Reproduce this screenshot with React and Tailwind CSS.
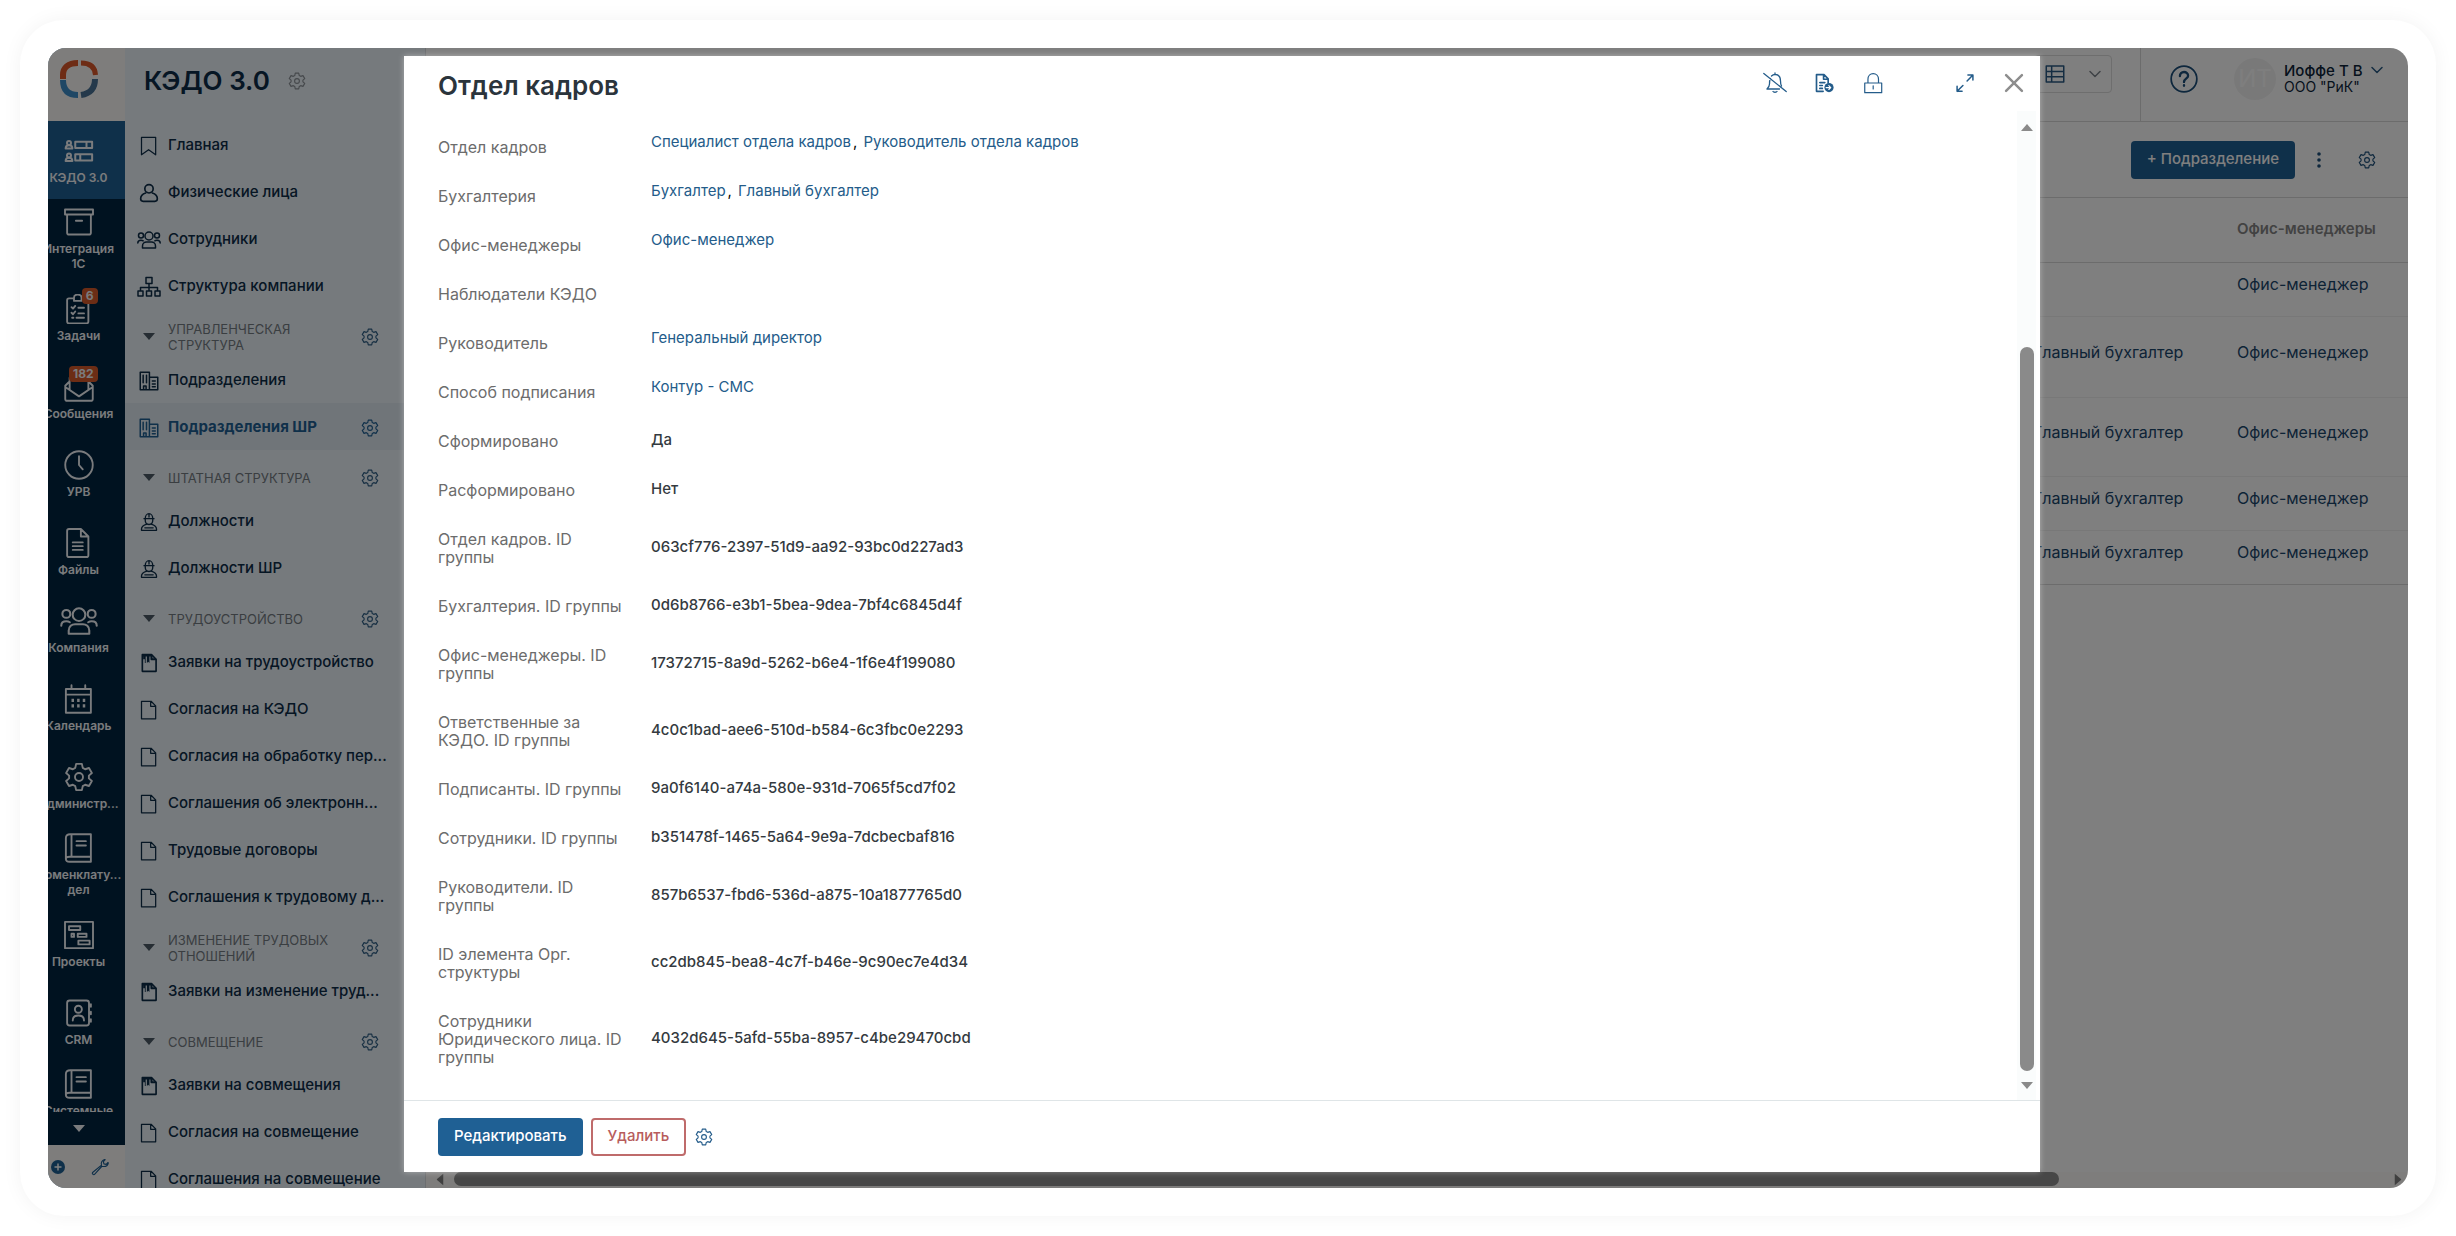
import { Fragment } from 'react';
import clsx from 'clsx';

// ---------- icons ----------

function Icon({ size = 20, stroke = 1.5, className, children }) {
  return (
    <svg
      width={size}
      height={size}
      viewBox="0 0 24 24"
      fill="none"
      stroke="currentColor"
      strokeWidth={stroke}
      strokeLinecap="round"
      strokeLinejoin="round"
      className={clsx('shrink-0', className)}
      aria-hidden="true"
    >
      {children}
    </svg>
  );
}

const Gear = (props) => (
  <Icon {...props}>
    <path d="M9.7 1.5h4.6l.7 3.2 1.9 1.1 3.1-1 2.3 4-2.4 2.1v2.2l2.4 2.1-2.3 4-3.1-1-1.9 1.1-.7 3.2H9.7L9 19.300l-1.900-1.100-3.100 1-2.300-4 2.400-2.100v-2.200L1.700 8.800l2.300-4 3.100 1L9 4.700z" />
    <circle cx="12" cy="12" r="3.200" />
  </Icon>
);

const Bookmark = () => <Icon><path d="M3 1.500h17v21l-8.500-6-8.500 6z" /></Icon>;

const Person = () => (
  <Icon stroke={2}>
    <circle cx="12" cy="7" r="5" />
    <path d="M8 12c-3.500 1-6 3.500-6 7 0 2 1 3 3 3h14c2 0 3-1 3-3 0-3.500-2.500-6-6-7" />
  </Icon>
);

const People = ({ size = 24, stroke = 1.5 }) => (
  <Icon size={size} stroke={stroke}>
    <circle cx="12" cy="8" r="4" />
    <circle cx="4" cy="7.500" r="2.500" />
    <circle cx="20" cy="7.500" r="2.500" />
    <path d="M5.500 20v-2c0-2.500 2-4 4-4h5c2 0 4 1.500 4 4v2z" />
    <path d="M.8 15c0-2 1.400-2.800 3.200-2.800 1 0 1.600.2 2.200.6M23.200 15c0-2-1.400-2.800-3.200-2.800-1 0-1.600.2-2.200.6" />
  </Icon>
);

const OrgTree = () => (
  <Icon size={24}>
    <path d="M9 2.500h6v6H9zM1 16h5v5H1zM9.500 16h5v5h-5zM18 16h5v5h-5zM12 8.500V16M3.500 16v-3.500h17V16" />
  </Icon>
);

const Building = () => (
  <Icon stroke={1.800}>
    <path d="M1.500 1.500h11v21h-11zM12.500 7.500h10v15h-10z" />
    <path d="M5 5v9M9 5v9M5.500 22v-4h3v4M16 12h3.500M16 15.500h3.500M16 19h3.500" />
  </Icon>
);

const Worker = () => (
  <Icon stroke={1.600}>
    <path d="M6 8h12M7.500 8c0-3.500 2-6 4.500-6s4.500 2.500 4.500 6M12 2v4M7.500 8v2c0 3 2 5 4.500 5s4.500-2 4.500-5V8" />
    <path d="M9.500 14.500C6 15.500 3 17 3 20.500V22h18v-1.500c0-3.500-3-5-6.500-6M7 19h10" />
  </Icon>
);

const Doc = () => <Icon><path d="M3 1.500h11.500l5.500 5.500v15.500H3zM14 1.500v6h6" /></Icon>;

const DocMarked = () => (
  <Icon stroke={2}>
    <path d="M4 2h11l5.500 5.500V22H4z" />
    <path d="M5 2.500h3v5H5zM9.500 3h3v9L11 10.500 9.500 12zM7 3h1v9H7z" fill="currentColor" stroke="none" />
    <path d="M5 3h9M15 3v4.500h4.500" strokeWidth="2.500" />
  </Icon>
);

const Forms = () => (
  <Icon size={30} stroke={1.600}>
    <circle cx="4" cy="5.500" r="1.600" />
    <path d="M1.300 10c0-2 1-2.600 2.700-2.600S6.700 8 6.700 10zM9 4.500h13.500v5H9zM18 4.500v5" />
    <circle cx="4" cy="15.500" r="1.600" />
    <path d="M1.300 20c0-2 1-2.600 2.700-2.600s2.700.6 2.700 2.600zM9 14.500h13.500v5H9zM13 14.500v5" />
  </Icon>
);

const Archive = () => (
  <Icon size={30}><path d="M.8 2h22.400v4H.8zM2.500 6h19v14.500c0 1-.5 1.500-1.500 1.500H4c-1 0-1.500-.5-1.500-1.500zM9.500 11h5" /></Icon>
);

const Tasks = () => (
  <Icon size={30}>
    <path d="M7 3.500H4c-1 0-1.500.5-1.500 1.500v17c0 1 .5 1.500 1.500 1.500h14c1 0 1.500-.5 1.500-1.500V5c0-1-.5-1.500-1.500-1.500h-3M8 5.500V3c0-1.500 1-2.500 3-2.500s3 1 3 2.500v2.500z" />
    <path d="M6 10.500l1.200 1.200L9 9.500M11.500 11H16M6 15l1.200 1.200L9 14M11.500 15.500H16M6.500 19h1M10 19h6" />
  </Icon>
);

const Mail = () => (
  <Icon size={30}>
    <path d="M4 8L1 11v10.500c0 1 .5 1.500 1.500 1.500h19c1 0 1.500-.5 1.500-1.500V11l-3-3M1 12l11 7.500L23 12M4.500 14V4.500h15V14" />
  </Icon>
);

const Clock = () => <Icon size={30}><circle cx="12" cy="12" r="11" /><path d="M12 5v7l3 3.500" /></Icon>;

const FileText = () => (
  <Icon size={30}><path d="M13.500.8H4c-1 0-1.500.5-1.500 1.500v19.400c0 1 .5 1.500 1.500 1.500h14c1 0 1.500-.5 1.500-1.500V6.800zM13.500.8v6h6M7 11.500h8M7 14.500h8M7 17.500h8" /></Icon>
);

const Calendar = () => (
  <Icon size={30}>
    <path d="M1.500 4h20v19h-20zM1.500 8.500h20M6 1v3M17 1v3" />
    <path d="M6 13h2M10.500 13h2M15 13h2M6 17.500h2M10.500 17.500h2M15 17.500h2" strokeWidth="2.600" strokeLinecap="butt" />
  </Icon>
);

const Book = () => (
  <Icon size={30}>
    <path d="M5 1h16.500v22H4.500c-2 0-3-1-3-2.500V4c0-2 1.500-3 3.500-3zM6 1v18M1.500 20.500c0-1 1-1.500 3-1.500h17M10 6.500h7.500M10 10h7.500" />
  </Icon>
);

const Projects = () => (
  <Icon size={30}><path d="M.8 1.500h22.400v21H.8zM4 5h9v3H4zM6 11h2v2.500H6zM11 11h7v2.500h-7zM11.500 16.500h9v3h-9z" /></Icon>
);

const Contacts = () => (
  <Icon size={30}>
    <path d="M4.500 2h13.500c1.500 0 2 .5 2 2v16c0 1.500-.5 2-2 2H4.500C3 22 2.500 21.500 2.500 20V4c0-1.500.5-2 2-2zM21.500 5v2M21.500 11v2M21.500 17v2" />
    <circle cx="11.500" cy="9" r="2.800" />
    <path d="M7 18c0-3 1.500-4 4.500-4s4.500 1 4.500 4" />
  </Icon>
);

const Wrench = () => (
  <Icon size={18}><path d="M14 9.500L2.500 19c-1 1-1 2 0 2.500.8 1 1.800 1 2.500 0L14.500 11M14 9.500c-1-3 .5-6.500 4-7.500l1 .3-2.500 2.500.7 3 3 .7L22.700 6l.3 1c-1 3.500-4.500 5-8.500 4" /></Icon>
);

const Chevron = ({ className }) => <Icon size={12} stroke={3} className={className}><path d="M2 7l10 10L22 7" /></Icon>;

const Caret = ({ className }) => (
  <svg width="12" height="7" viewBox="0 0 12 7" className={clsx('shrink-0', className)} aria-hidden="true">
    <path d="M0 0h12L6 7z" fill="currentColor" />
  </svg>
);

const BellOff = () => (
  <Icon size={24} stroke={1.300}>
    <path d="M.8 2.500l22.400 18M7.500 7.500C6.500 9 6.500 10.500 6.500 13c0 2-1 3.500-2.500 5h12.500M8.500 5c1-1 2.200-1.500 3.500-1.500 3.500 0 5.500 2.700 5.500 6.500 0 2 .3 3.700 1 5M12 3.500V2M10 20.500c.5 1 3.500 1 4 0" />
  </Icon>
);

const DocSend = () => (
  <Icon size={20} stroke={2}>
    <path d="M11 22H3V2h9l5 5v5M11.500 2v5.500H17M7 11.500h6M7 15h3M7 18.500h3" />
    <circle cx="18" cy="17.500" r="5.500" fill="currentColor" stroke="none" />
    <path d="M14.500 17.500h5.500M17.800 15.200l2.300 2.300-2.300 2.300" stroke="white" strokeWidth="1.400" />
  </Icon>
);

const Lock = () => (
  <Icon size={22} stroke={1.300}><path d="M3 12h18.500v10.500H3zM6.500 12V8c0-3.700 2.500-6.200 5.700-6.200S18 4.300 18 8v4M12.200 15v3.500" /></Icon>
);

const Expand = () => (
  <Icon size={20} stroke={1.800}><path d="M14.500 9.500l7-7M15.500 2.500h6v6M9.500 15l-7 7M2.500 16v6h6" /></Icon>
);

const Close = () => <Icon size={20} stroke={3}><path d="M2.500 2.500l19 19M21.500 2.500l-19 19" /></Icon>;

const Grid = () => <Icon stroke={1.800}><path d="M1.500 2.500h21v19h-21zM1.500 9h21M1.500 15.200h21M8 2.500v19" /></Icon>;

const Logo = () => (
  <svg width="40" height="40" viewBox="0 0 40 40" fill="none" strokeWidth="6" aria-hidden="true">
    <path d="M4 20v-4C4 9 9 4 19 4" stroke="#dc582a" />
    <path d="M22 4c9 0 14 4 14.500 12" stroke="#dc582a" strokeWidth="5" />
    <path d="M4 21c0 9 4 15 15 15" stroke="#3f8fcb" />
    <path d="M36 20c0 9-4 14.500-14 16" stroke="#4a7396" />
  </svg>
);

// ---------- data ----------

const railItems = [
  { label: 'КЭДО 3.0', icon: Forms, active: true },
  { label: 'Интеграция 1С', icon: Archive, tall: true },
  { label: 'Задачи', icon: Tasks, badge: '6' },
  { label: 'Сообщения', icon: Mail, badge: '182' },
  { label: 'УРВ', icon: Clock },
  { label: 'Файлы', icon: FileText },
  { label: 'Компания', icon: () => <People size={38} stroke={1.300} /> },
  { label: 'Календарь', icon: Calendar },
  { label: 'Администр...', icon: () => <Gear size={30} /> },
  { label: 'Номенклату... дел', icon: Book, tall: true },
  { label: 'Проекты', icon: Projects },
  { label: 'CRM', icon: Contacts },
  { label: 'Системные', icon: Book, tall: true },
];

const navItems = [
  { label: 'Главная', icon: Bookmark },
  { label: 'Физические лица', icon: Person },
  { label: 'Сотрудники', icon: People },
  { label: 'Структура компании', icon: OrgTree },
  { heading: 'Управленческая структура' },
  { label: 'Подразделения', icon: Building },
  { label: 'Подразделения ШР', icon: Building, active: true },
  { heading: 'Штатная структура' },
  { label: 'Должности', icon: Worker },
  { label: 'Должности ШР', icon: Worker },
  { heading: 'Трудоустройство' },
  { label: 'Заявки на трудоустройство', icon: DocMarked },
  { label: 'Согласия на КЭДО', icon: Doc },
  { label: 'Согласия на обработку пер...', icon: Doc },
  { label: 'Соглашения об электронн...', icon: Doc },
  { label: 'Трудовые договоры', icon: Doc },
  { label: 'Соглашения к трудовому д...', icon: Doc },
  { heading: 'Изменение трудовых отношений' },
  { label: 'Заявки на изменение труд...', icon: DocMarked },
  { heading: 'Совмещение' },
  { label: 'Заявки на совмещения', icon: DocMarked },
  { label: 'Согласия на совмещение', icon: Doc },
  { label: 'Соглашения на совмещение', icon: Doc },
];

const fields = [
  { label: 'Отдел кадров', links: ['Специалист отдела кадров', 'Руководитель отдела кадров'] },
  { label: 'Бухгалтерия', links: ['Бухгалтер', 'Главный бухгалтер'] },
  { label: 'Офис-менеджеры', links: ['Офис-менеджер'] },
  { label: 'Наблюдатели КЭДО' },
  { label: 'Руководитель', links: ['Генеральный директор'] },
  { label: 'Способ подписания', links: ['Контур - СМС'] },
  { label: 'Сформировано', value: 'Да' },
  { label: 'Расформировано', value: 'Нет' },
  { label: 'Отдел кадров. ID группы', value: '063cf776-2397-51d9-aa92-93bc0d227ad3' },
  { label: 'Бухгалтерия. ID группы', value: '0d6b8766-e3b1-5bea-9dea-7bf4c6845d4f' },
  { label: 'Офис-менеджеры. ID группы', value: '17372715-8a9d-5262-b6e4-1f6e4f199080' },
  { label: 'Ответственные за КЭДО. ID группы', value: '4c0c1bad-aee6-510d-b584-6c3fbc0e2293' },
  { label: 'Подписанты. ID группы', value: '9a0f6140-a74a-580e-931d-7065f5cd7f02' },
  { label: 'Сотрудники. ID группы', value: 'b351478f-1465-5a64-9e9a-7dcbecbaf816' },
  { label: 'Руководители. ID группы', value: '857b6537-fbd6-536d-a875-10a1877765d0' },
  { label: 'ID элемента Орг. структуры', value: 'cc2db845-bea8-4c7f-b46e-9c90ec7e4d34' },
  { label: 'Сотрудники Юридического лица. ID группы', value: '4032d645-5afd-55ba-8957-c4be29470cbd' },
];

const tableRows = [
  { height: 'h-[54px]', accountant: '', manager: 'Офис-менеджер' },
  { height: 'h-[81px]', accountant: 'Главный бухгалтер', manager: 'Офис-менеджер' },
  { height: 'h-[79px]', accountant: 'Главный бухгалтер', manager: 'Офис-менеджер' },
  { height: 'h-[54px]', accountant: 'Главный бухгалтер', manager: 'Офис-менеджер' },
  { height: 'h-[54px]', accountant: 'Главный бухгалтер', manager: 'Офис-менеджер' },
];

// ---------- layout parts ----------

function Rail() {
  return (
    <aside className="flex w-[77px] shrink-0 flex-col overflow-hidden bg-[#002440] text-[#f4f7fa]">
      <div className="-ml-4 flex h-[73px] w-[93px] shrink-0 items-center justify-center bg-[#fdfbf8] pb-3">
        <Logo />
      </div>
      <nav className="-ml-4 min-h-0 w-[93px] flex-1 overflow-hidden">
        {railItems.map(({ label, icon: ItemIcon, active, tall, badge }) => (
          <a
            key={label}
            href="#"
            className={clsx(
              'flex flex-col items-center gap-1',
              tall ? 'h-[80px] pt-2' : 'h-[78px] justify-center',
              active && 'bg-[#1f6094]'
            )}
          >
            <span className="relative flex h-[30px] items-center justify-center">
              <ItemIcon />
              {badge && (
                <span className="absolute -top-1.5 -right-1 rounded-sm bg-[#d95a2b] px-1 text-xs leading-4 font-bold">{badge}</span>
              )}
            </span>
            <span className="px-1 text-center text-xs leading-[15px] font-semibold">{label}</span>
          </a>
        ))}
      </nav>
      <button type="button" aria-label="Ещё" className="flex h-[33px] shrink-0 items-center justify-center pr-4">
        <Caret />
      </button>
      <div className="flex h-[43px] shrink-0 items-center justify-between bg-[#fdfbf8] pr-4 pl-[3px] text-[#1f6094]">
        <button type="button" aria-label="Добавить">
          <svg width="14" height="14" viewBox="0 0 14 14" aria-hidden="true">
            <circle cx="7" cy="7" r="7" fill="currentColor" />
            <path d="M7 3.500v7M3.500 7h7" stroke="white" strokeWidth="1.500" />
          </svg>
        </button>
        <button type="button" aria-label="Инструменты"><Wrench /></button>
      </div>
    </aside>
  );
}

function Sidebar() {
  return (
    <aside className="flex w-[301px] shrink-0 flex-col overflow-hidden border-r border-[#d8dde1] bg-[#ecf4fa] text-[#0c2c48]">
      <div className="flex h-[73px] shrink-0 items-center gap-[18px] pb-2 pl-[19px]">
        <h1 className="text-[26px] font-semibold">КЭДО 3.0</h1>
        <button type="button" aria-label="Настройки раздела" className="text-[#8c9298]"><Gear size={18} /></button>
      </div>
      <nav className="min-h-0 flex-1 overflow-hidden">
        {navItems.map(({ label, heading, icon: ItemIcon, active }) =>
          heading ? (
            <div key={heading} className="flex h-[47px] items-center pt-2 pr-[46px] pl-3 text-[#757c83]">
              <span className="flex w-[31px] justify-center pr-2 text-[#4c5a66]"><Caret /></span>
              <span className="flex-1 pr-4 text-[13px] leading-4 uppercase">{heading}</span>
              <button type="button" aria-label="Настройки группы" className="text-[#2f5f86]"><Gear size={18} /></button>
            </div>
          ) : (
            <a
              key={label}
              href="#"
              className={clsx(
                'flex h-[47px] items-center pt-0.5 pr-[46px] pl-3 text-[15px] whitespace-nowrap',
                active ? 'bg-[#e1ebf3] font-bold text-[#1f6094]' : 'font-medium'
              )}
            >
              <span className="flex w-[31px] shrink-0 justify-center pr-2"><ItemIcon /></span>
              <span className="flex-1">{label}</span>
              {active && <Gear size={18} />}
            </a>
          )
        )}
      </nav>
    </aside>
  );
}

function TopBar() {
  return (
    <header className="flex h-[74px] items-stretch justify-end border-b border-[#d9d9d9]">
      <div className="pt-[7px] pr-7">
        <button type="button" aria-label="Вид списка" className="flex h-[38px] items-center gap-6 rounded-sm border border-[#dcdcdc] px-2.5 text-[#2a5b84]">
          <Grid />
          <Chevron className="text-[#7d858c]" />
        </button>
      </div>
      <div className="flex w-[268px] items-start border-l border-[#d9d9d9] pt-[10px] pl-[29px]">
        <button type="button" aria-label="Помощь" className="mt-[7px] text-[#1c4f7a]">
          <Icon size={28} stroke={1.500}>
            <circle cx="12" cy="12" r="11" />
            <path d="M8.500 9.500C8.500 7.500 10 6 12 6s3.500 1.300 3.500 3.200c0 2.500-3.500 2.600-3.500 5.300M12 17.300v.4" strokeWidth="2" />
          </Icon>
        </button>
        <span className="ml-9 flex size-[42px] items-center justify-center rounded-full bg-[#f3f3f3] text-2xl text-[#fdfdfd]">ИТ</span>
        <button type="button" className="ml-2 flex items-start gap-2 pt-1 text-left text-[#0c2338]">
          <span>
            <span className="block text-[15px] leading-[18px] font-medium">Иоффе Т В</span>
            <span className="block text-sm leading-[14px]">ООО "РиК"</span>
          </span>
          <Chevron className="mt-0.5 text-[#2a5b84]" />
        </button>
      </div>
    </header>
  );
}

function Main() {
  return (
    <main className="flex min-w-0 flex-1 flex-col bg-white">
      <TopBar />
      <div className="flex h-[76px] items-center justify-end border-b border-[#d9d9d9] pr-8 text-[#1c4f7a]">
        <button type="button" className="h-[38px] rounded-sm bg-[#1f6094] px-4 text-[15px] font-medium text-white">+ Подразделение</button>
        <button type="button" aria-label="Ещё" className="ml-3">
          <svg width="24" height="18" viewBox="0 0 24 18" fill="currentColor" aria-hidden="true">
            <circle cx="12" cy="3" r="1.800" />
            <circle cx="12" cy="9" r="1.800" />
            <circle cx="12" cy="15" r="1.800" />
          </svg>
        </button>
        <button type="button" aria-label="Настройки" className="ml-[27px]"><Gear size={18} /></button>
      </div>
      <table className="w-full table-fixed border-collapse text-left text-base">
        <colgroup>
          <col />
          <col className="w-[204px]" />
          <col className="w-[171px]" />
        </colgroup>
        <thead>
          <tr className="h-[64px] border-b border-[#d9d9d9] text-[15px] text-[#858585]">
            <th />
            <th />
            <th className="pb-0.5 font-semibold">Офис-менеджеры</th>
          </tr>
        </thead>
        <tbody className="text-[#1a466c]">
          {tableRows.map((row, i) => (
            <tr key={i} className={clsx(row.height, 'border-b border-[#f0f0f0] last:border-[#d9d9d9]')}>
              <td />
              <td className="pb-2.5 whitespace-nowrap">{row.accountant && <a href="#">{row.accountant}</a>}</td>
              <td className="pb-2.5 whitespace-nowrap"><a href="#">{row.manager}</a></td>
            </tr>
          ))}
        </tbody>
      </table>
      {/* horizontal scrollbar */}
      <div className="mt-auto flex h-4 items-center bg-[#fcfbf8] pr-1 pb-0.5 pl-2 text-[#808080]">
        <Caret className="rotate-90" />
        <div className="ml-2 h-[14px] w-[calc(82%-10px)] rounded-full bg-[#8e8e8e]" />
        <Caret className="ml-auto -rotate-90" />
      </div>
    </main>
  );
}

function Field({ label, value, links }) {
  return (
    <div className="flex items-center pt-4 pb-[15px]">
      <dt className="w-[213px] shrink-0 pr-6 text-base leading-[18px] text-[#6c6c6c]">{label}</dt>
      <dd className={clsx('text-[15px] leading-[18px]', links ? '-my-3 pb-2.5' : 'pb-0.5 -my-1 font-medium text-[#343a40]')}>
        {links
          ? links.map((link, i) => (
              <Fragment key={link}>
                {i > 0 && <span className="mr-1.5 ml-0.5">,</span>}
                <a href="#" className="text-[#245c8a]">{link}</a>
              </Fragment>
            ))
          : value}
      </dd>
    </div>
  );
}

function DepartmentModal() {
  return (
    <section role="dialog" aria-label="Отдел кадров" className="absolute top-2 right-[368px] bottom-4 left-[356px] flex flex-col bg-white shadow-[0_0_6px_rgba(255,255,255,0.4)]">
      <header className="flex h-[55px] shrink-0 items-center pt-1 pr-[14px] pl-[34px] text-[#245c8a]">
        <h2 className="flex-1 text-[26px] font-semibold text-[#2b343c]">Отдел кадров</h2>
        <div className="flex items-center gap-[25px] pb-1.5">
          <button type="button" aria-label="Отключить уведомления" className="flex w-6 justify-center"><BellOff /></button>
          <button type="button" aria-label="Отправить документ" className="flex w-6 justify-center"><DocSend /></button>
          <button type="button" aria-label="Доступ" className="flex w-6 justify-center"><Lock /></button>
          <button type="button" aria-label="Развернуть" className="ml-[43px] flex w-6 justify-center"><Expand /></button>
          <button type="button" aria-label="Закрыть" className="flex w-6 justify-center text-[#8e8e8e]"><Close /></button>
        </div>
      </header>
      <div className="flex min-h-0 flex-1">
        <dl className="min-w-0 flex-1 overflow-hidden pt-[11px] pl-[34px]">
          {fields.map((field) => <Field key={field.label} {...field} />)}
        </dl>
        <div className="mr-1 flex w-[19px] flex-col items-center bg-[#fafcfc] text-[#8a8a8a]">
          <span className="flex h-8 items-center"><Caret className="rotate-180" /></span>
          <span className="flex-[204]" />
          <span className="w-[14px] flex-[724] rounded-full bg-[#8a8a8a]" />
          <span className="flex h-[29px] items-center"><Caret /></span>
        </div>
      </div>
      <footer className="flex h-[72px] shrink-0 items-center border-t border-[#dfe5e7] pl-[34px] text-[15px]">
        <button type="button" className="h-[38px] rounded-sm bg-[#1f6094] px-4 font-medium text-white">Редактировать</button>
        <button type="button" className="ml-2 h-[38px] rounded-sm border-2 border-[#bf6b6b] px-[15px] font-medium text-[#b85c5c]">Удалить</button>
        <button type="button" aria-label="Настройки формы" className="ml-[9px] text-[#245c8a]"><Gear size={18} /></button>
      </footer>
    </section>
  );
}

export default function App() {
  return (
    <div className="h-screen bg-white p-5 font-['Inter','Liberation_Sans',sans-serif]">
      <div className="h-full rounded-[44px] bg-white p-7 shadow-[0_0_20px_rgba(0,0,0,0.05)]">
        <div className="relative flex h-full overflow-hidden rounded-[18px]">
          <Rail />
          <Sidebar />
          <Main />
          <div className="absolute inset-0 bg-black/50" />
          <DepartmentModal />
        </div>
      </div>
    </div>
  );
}
